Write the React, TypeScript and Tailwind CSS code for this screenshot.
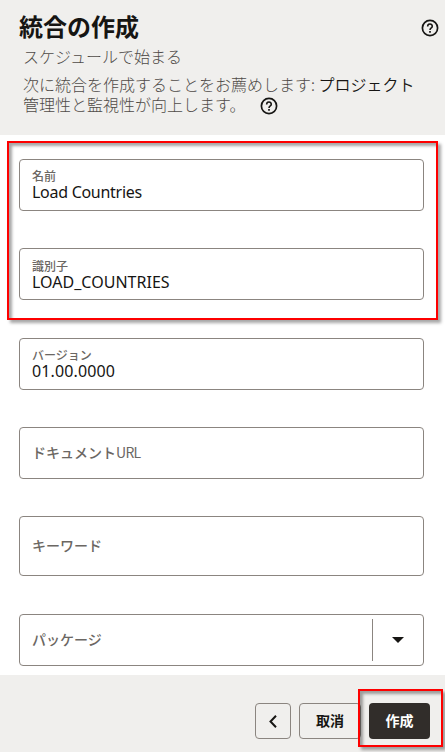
import React from "react";

const jp = "font-['Noto_Sans_CJK_JP',sans-serif]";

function HelpIcon() {
  return (
    <svg width="18" height="18" viewBox="0 0 18 18" fill="none" stroke="#161513" className="block shrink-0">
      <circle cx="9" cy="9" r="7.6" strokeWidth="1.7" />
      <path d="M6.7 7.4V7.1a2.3 2.1 0 1 1 3.6 1.7C9.4 9.4 9 9.7 9 10.9" strokeWidth="1.6" />
      <path d="M9 12v1.7" strokeWidth="1.7" />
    </svg>
  );
}

function FilledField({ label, value, spacing, className = "" }: { label: string; value: string; spacing: string; className?: string }) {
  return (
    <div className={`h-[52px] shrink-0 rounded border border-[#8b8580] pl-3 ${className}`}>
      <div className="h-4 whitespace-nowrap text-[12px] font-medium leading-4 text-[#6b6763]">{label}</div>
      <div className={`h-4 whitespace-nowrap font-['Noto_Sans',sans-serif] text-base leading-4 text-[#161513] ${spacing}`}>{value}</div>
    </div>
  );
}

function EmptyField({ label, className = "", children }: { label: React.ReactNode; className?: string; children?: React.ReactNode }) {
  return (
    <div className={`flex shrink-0 items-center justify-between rounded border border-[#8b8580] pl-3 ${className}`}>
      <span className="whitespace-nowrap pb-0.5 text-sm font-medium leading-5 text-[#6b6763]">{label}</span>
      {children}
    </div>
  );
}

export default function App() {
  return (
    <div className={`relative flex h-[752px] w-[445px] flex-col overflow-hidden bg-white text-[#161513] ${jp}`}>
      <header className="h-[135px] shrink-0 bg-[#f0efed]">
        <div className="flex h-[42px] items-start justify-between pl-[19px] pr-[6px] pt-[10px]">
          <h1 className="text-2xl font-bold leading-8">統合の作成</h1>
          <div className="pt-[9px]"><HelpIcon /></div>
        </div>
        <div className="whitespace-nowrap pl-[23px] pt-1 text-base font-light leading-5 text-[#4f4b48]">スケジュールで始まる</div>
        <div className="whitespace-nowrap pl-[23px] pt-2 text-base font-light leading-5 text-[#4f4b48]">
          <div>次に統合を作成することをお薦めします: <span className="font-[350] text-[#161513]">プロジェクト</span></div>
          <div className="flex h-5 items-center">
            <span className="w-[237px]">管理性と監視性が向上します。</span>
            <div className="pt-[3px]"><HelpIcon /></div>
          </div>
        </div>
      </header>

      <main className="flex h-[540px] shrink-0 flex-col pl-[19px] pr-[21px] pt-6">
        <FilledField label="名前" value="Load Countries" spacing="tracking-[-0.28px]" className="pt-2" />
        <FilledField label="識別子" value="LOAD_COUNTRIES" spacing="tracking-[0.02px]" className="mt-[37px] pt-[9px]" />
        <FilledField label="バージョン" value="01.00.0000" spacing="tracking-[0.12px]" className="mt-[38px] pt-2" />
        <EmptyField label={<>ドキュメント<span className="font-normal tracking-[-0.7px]">URL</span></>} className="mt-[37px] h-[52px]" />
        <EmptyField label="キーワード" className="mt-[37px] h-[60px]" />
        <EmptyField label="パッケージ" className="mt-[38px] h-[52px]">
          <div className="flex h-[42px] w-[51px] items-center justify-center border-l border-[#8b8580]">
            <svg width="12" height="6" viewBox="0 0 12 6"><path d="M0 0h12L6 6z" fill="#161513" /></svg>
          </div>
        </EmptyField>
      </main>

      <footer className="flex h-[77px] shrink-0 items-start justify-end gap-2 bg-[#f0efed] pr-[15px] pt-7 text-sm font-bold">
        <button className="flex h-9 w-9 items-center justify-center rounded border border-[#8b8580]">
          <svg width="8" height="13" viewBox="0 0 8 13" fill="none" stroke="#161513" strokeWidth="2"><path d="M7 .8 1.5 6.5 7 12.2" /></svg>
        </button>
        <button className="h-9 w-[62px] rounded border border-[#8b8580] pb-0.5">取消</button>
        <button className="h-9 w-[61px] rounded bg-[#312d2a] pb-0.5 text-white">作成</button>
      </footer>

      <div className="pointer-events-none absolute left-[7px] top-[141px] h-[179px] w-[431px] border-2 border-[#fe0000] shadow-[3px_3px_3px_rgba(0,0,0,0.35),inset_3px_3px_3px_rgba(0,0,0,0.35)]" />
      <div className="pointer-events-none absolute left-[358px] top-[689px] h-[58px] w-[85px] border-2 border-[#fe0000] shadow-[3px_3px_3px_rgba(0,0,0,0.35),inset_3px_3px_3px_rgba(0,0,0,0.35)]" />
    </div>
  );
}
